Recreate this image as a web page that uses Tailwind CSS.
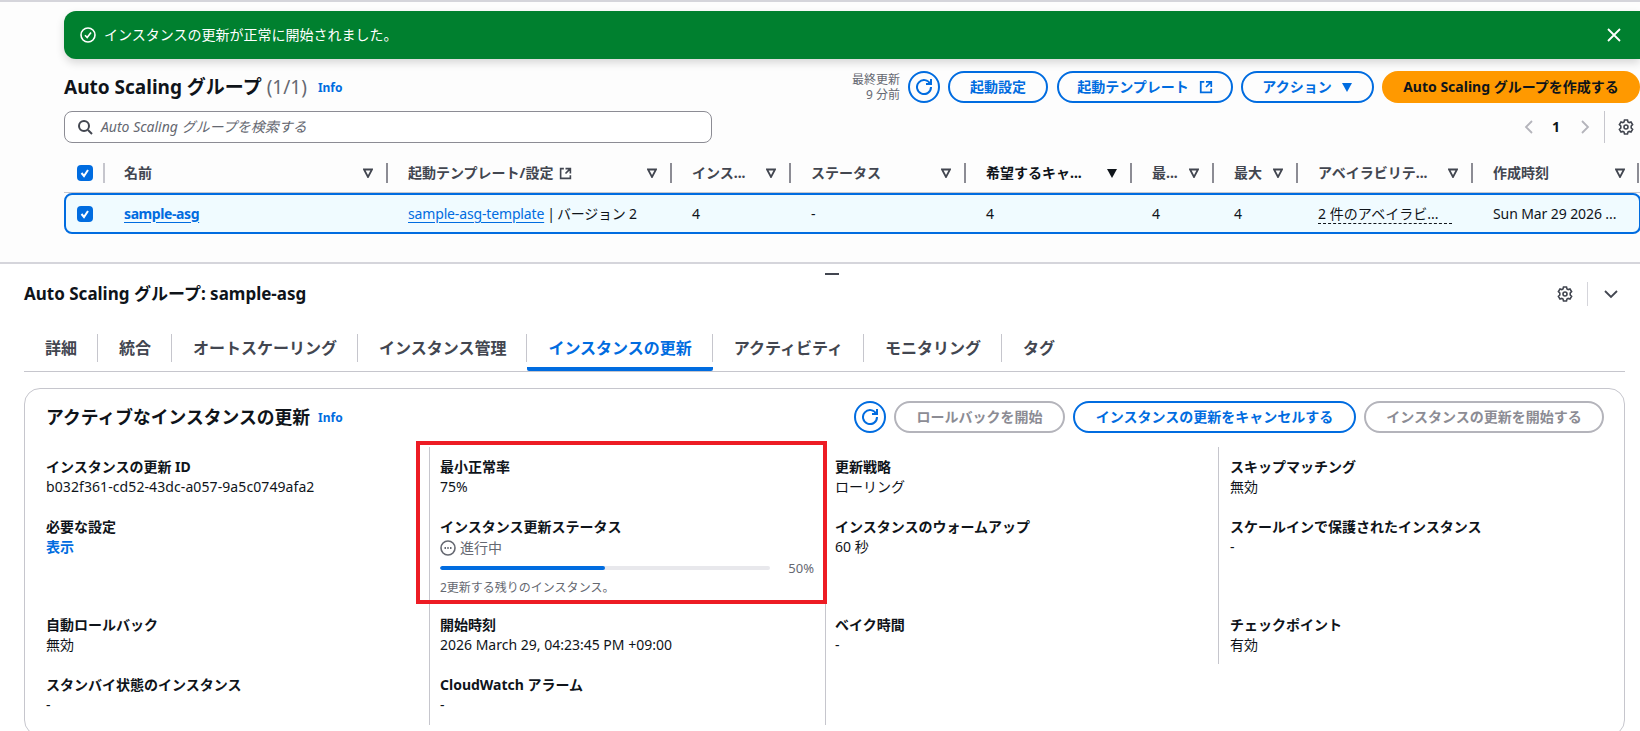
<!DOCTYPE html>
<html lang="ja"><head><meta charset="utf-8">
<script src="https://cdn.jsdelivr.net/npm/@tailwindcss/browser@4"></script>
</head>
<body class="bg-white text-[#0f141a] text-[14px] leading-[20px] font-['Noto_Sans','Noto_Sans_CJK_JP',sans-serif] overflow-hidden">
<div class="relative w-[1640px] h-[731px] overflow-hidden">
  <section class="h-[264px] border-t-2 border-b-2 border-[#d5d5db] bg-[#fdfdfd] pl-[64px] pt-[9px] box-border">
    <div class="h-[48px] bg-[#00802f] rounded-l-[12px] text-white flex items-center pl-[16px] pr-[16px] shadow-[0_4px_8px_rgba(0,0,0,0.15)]">
      <svg class="w-[16px] h-[16px] mr-[8px]" viewBox="0 0 16 16" fill="none" stroke="currentColor" stroke-width="1.6"><circle cx="8" cy="8" r="7"/><path d="m5 8.2 2.2 2.3L11 5.5"/></svg>
      <span class="text-[14px]">インスタンスの更新が正常に開始されました。</span>
      <svg class="w-[16px] h-[16px] ml-auto mr-[2px]" viewBox="0 0 16 16" fill="none" stroke="currentColor" stroke-width="1.8"><path d="m2 2 12 12M14 2 2 14"/></svg>
    </div>
    <div class="flex items-center h-[32px] mt-[12px]">
      <h1 class="text-[19px] font-bold leading-[24px]">Auto Scaling グループ <span class="font-normal text-[#656871]">(1/1)</span></h1>
      <a class="text-[12px] font-bold text-[#006ce0] ml-[11px] mt-[2px]">Info</a>
      <div class="ml-auto text-[12px] leading-[15px] text-[#656871] text-right mr-[8px] w-[50px]">最終更新<br>9 分前</div>
      <button class="w-[32px] h-[32px] rounded-full border-2 border-[#006ce0] flex items-center justify-center text-[#006ce0] mr-[8px]">
        <svg class="w-[16px] h-[16px]" viewBox="0 0 16 16" fill="none" stroke="currentColor" stroke-width="2"><path d="M10 5h5V0"/><path d="M15 8a7 7 0 1 1-.7-3"/></svg></button>
      <button class="w-[100px] h-[32px] rounded-full border-2 border-[#006ce0] text-[#006ce0] font-bold text-[14px] mr-[9px]">起動設定</button>
      <button class="w-[176px] h-[32px] rounded-full border-2 border-[#006ce0] text-[#006ce0] font-bold text-[14px] mr-[8px] flex items-center justify-center gap-[10px]">起動テンプレート
        <svg class="w-[14px] h-[14px]" viewBox="0 0 16 16" fill="none" stroke="currentColor" stroke-width="2"><path d="M14 8V2H8M14 2 8 8M6 2H2v12h12v-4"/></svg></button>
      <button class="w-[133px] h-[32px] rounded-full border-2 border-[#006ce0] text-[#006ce0] font-bold text-[14px] mr-[8px] flex items-center justify-center gap-[9px]">アクション
        <svg class="w-[12px] h-[12px]" viewBox="0 0 12 12" fill="currentColor"><path d="M1 2h10L6 11z"/></svg></button>
      <button class="w-[258px] h-[32px] rounded-full bg-[#ff9900] font-bold text-[14px]">Auto Scaling グループを作成する</button>
    </div>
    <div class="flex items-center h-[32px] mt-[8px]">
      <div class="w-[648px] h-[32px] border border-[#8c8c94] rounded-[8px] bg-white flex items-center pl-[12px] italic text-[#656871] text-[14px]">
        <svg class="w-[16px] h-[16px] mr-[8px] text-[#424650]" viewBox="0 0 16 16" fill="none" stroke="currentColor" stroke-width="2"><circle cx="7" cy="7" r="5"/><path d="m11 11 4 4"/></svg>
        Auto Scaling グループを検索する
      </div>
      <div class="ml-auto flex items-center h-[32px] text-[#0f141a]">
        <svg class="w-[12px] h-[16px] text-[#b4b4bb] mr-[17px]" viewBox="0 0 12 16" fill="none" stroke="currentColor" stroke-width="1.8"><path d="M9 2 3 8l6 6"/></svg>
        <span class="font-bold text-[14px] mr-[19px]">1</span>
        <svg class="w-[12px] h-[16px] text-[#b4b4bb] mr-[13px]" viewBox="0 0 12 16" fill="none" stroke="currentColor" stroke-width="1.8"><path d="m3 2 6 6-6 6"/></svg>
        <span class="w-px h-[32px] bg-[#c6c6cd] mr-[13px]"></span>
        <svg class="w-[16px] h-[16px] mr-[6px] text-[#424650]" viewBox="0 0 16 16" fill="none" stroke="currentColor" stroke-width="1.6"><path d="M6.5 1h3l.5 1.9 1.2.7 1.8-.6 1.6 2.6L13.2 7v2l1.4 1.4-1.6 2.6-1.8-.6-1.2.7-.5 1.9h-3L6 13.1l-1.2-.7-1.8.6-1.6-2.6L2.8 9V7L1.4 5.6 3 3l1.8.6L6 2.9z"/><circle cx="8" cy="8" r="2"/></svg>
      </div>
    </div>
    <div class="flex items-center h-[20px] mt-[20px] font-bold text-[#424650] text-[14px]">
      <div class="w-[60px] flex items-center shrink-0 pl-[13px]">
        <span class="w-[16px] h-[16px] rounded-[4px] bg-[#006ce0] flex items-center justify-center"><svg class="w-[12px] h-[12px]" viewBox="0 0 12 12" fill="none" stroke="#fff" stroke-width="2"><path d="m2.5 6 2.5 3 4-6"/></svg></span>
        <span class="w-[2px] h-[20px] bg-[#c6c6cd] ml-[10px]"></span>
      </div>
      <div class="w-[284px] shrink-0 flex items-center pr-[20px]"><span>名前</span><span class="ml-auto text-[#424650] mr-[13px] w-[10px] h-[10px]"><svg viewBox="0 0 10 10" fill="none" stroke="currentColor" stroke-width="1.8"><path d="M1 1.5h8L5 9z"/></svg></span><span class="w-[2px] h-[20px] bg-[#8c8c94]"></span></div>
      <div class="w-[284px] shrink-0 flex items-center pr-[20px]"><span>起動テンプレート/設定</span><svg class="w-[13px] h-[13px] ml-[6px]" viewBox="0 0 16 16" fill="none" stroke="currentColor" stroke-width="2"><path d="M14 8V2H8M14 2 8 8M6 2H2v12h12v-4"/></svg><span class="ml-auto mr-[13px] w-[10px] h-[10px]"><svg viewBox="0 0 10 10" fill="none" stroke="currentColor" stroke-width="1.8"><path d="M1 1.5h8L5 9z"/></svg></span><span class="w-[2px] h-[20px] bg-[#8c8c94]"></span></div>
      <div class="w-[119px] shrink-0 flex items-center pr-[20px]"><span>インス...</span><span class="ml-auto mr-[13px] w-[10px] h-[10px]"><svg viewBox="0 0 10 10" fill="none" stroke="currentColor" stroke-width="1.8"><path d="M1 1.5h8L5 9z"/></svg></span><span class="w-[2px] h-[20px] bg-[#8c8c94]"></span></div>
      <div class="w-[175px] shrink-0 flex items-center pr-[20px]"><span>ステータス</span><span class="ml-auto mr-[13px] w-[10px] h-[10px]"><svg viewBox="0 0 10 10" fill="none" stroke="currentColor" stroke-width="1.8"><path d="M1 1.5h8L5 9z"/></svg></span><span class="w-[2px] h-[20px] bg-[#8c8c94]"></span></div>
      <div class="w-[166px] shrink-0 flex items-center pr-[20px] text-[#0f141a]"><span>希望するキャ...</span><span class="ml-auto mr-[13px] w-[10px] h-[10px]"><svg viewBox="0 0 10 10" fill="currentColor"><path d="M0 1h10L5 10z"/></svg></span><span class="w-[2px] h-[20px] bg-[#8c8c94]"></span></div>
      <div class="w-[82px] shrink-0 flex items-center pr-[20px]"><span>最...</span><span class="ml-auto mr-[13px] w-[10px] h-[10px]"><svg viewBox="0 0 10 10" fill="none" stroke="currentColor" stroke-width="1.8"><path d="M1 1.5h8L5 9z"/></svg></span><span class="w-[2px] h-[20px] bg-[#8c8c94]"></span></div>
      <div class="w-[84px] shrink-0 flex items-center pr-[20px]"><span>最大</span><span class="ml-auto mr-[13px] w-[10px] h-[10px]"><svg viewBox="0 0 10 10" fill="none" stroke="currentColor" stroke-width="1.8"><path d="M1 1.5h8L5 9z"/></svg></span><span class="w-[2px] h-[20px] bg-[#8c8c94]"></span></div>
      <div class="w-[175px] shrink-0 flex items-center pr-[20px]"><span>アベイラビリテ...</span><span class="ml-auto mr-[13px] w-[10px] h-[10px]"><svg viewBox="0 0 10 10" fill="none" stroke="currentColor" stroke-width="1.8"><path d="M1 1.5h8L5 9z"/></svg></span><span class="w-[2px] h-[20px] bg-[#8c8c94]"></span></div>
      <div class="w-[147px] shrink-0 flex items-center pr-[1px]"><span>作成時刻</span><span class="ml-auto mr-[12px] w-[10px] h-[10px]"><svg viewBox="0 0 10 10" fill="none" stroke="currentColor" stroke-width="1.8"><path d="M1 1.5h8L5 9z"/></svg></span><span class="w-[2px] h-[20px] bg-[#8c8c94]"></span></div>
    </div>
    <div class="h-px bg-[#c6c6cd] mt-[9px]"></div>
    <div class="flex items-center h-[41px] border-2 border-[#006ce0] rounded-[8px] bg-[#f0fbff] -mr-px box-border">
      <div class="w-[58px] shrink-0 pl-[11px]"><span class="w-[16px] h-[16px] rounded-[4px] bg-[#006ce0] flex items-center justify-center"><svg class="w-[12px] h-[12px]" viewBox="0 0 12 12" fill="none" stroke="#fff" stroke-width="2"><path d="m2.5 6 2.5 3 4-6"/></svg></span></div>
      <div class="w-[284px] shrink-0"><a class="font-bold tracking-[-0.4px] text-[#006ce0] underline underline-offset-3">sample-asg</a></div>
      <div class="w-[284px] shrink-0 whitespace-nowrap"><a class="text-[#006ce0] tracking-[-0.15px] underline underline-offset-3">sample-asg-template</a><span class="ml-[3px]">|</span><span class="ml-[2px] tracking-[-0.2px]">バージョン 2</span></div>
      <div class="w-[119px] shrink-0">4</div>
      <div class="w-[175px] shrink-0">-</div>
      <div class="w-[166px] shrink-0">4</div>
      <div class="w-[82px] shrink-0">4</div>
      <div class="w-[84px] shrink-0">4</div>
      <div class="w-[175px] shrink-0"><span class="border-b border-dashed border-[#0f141a] inline-block w-[134px] leading-[19px]">2 件のアベイラビ...</span></div>
      <div class="w-[143px] shrink-0 whitespace-nowrap tracking-[-0.1px]">Sun Mar 29 2026 ...</div>
    </div>
  </section>
  <div class="absolute left-[825px] top-[273px] w-[14px] h-[2px] bg-[#424650]"></div>
  <section class="px-[24px]">
    <div class="flex items-center h-[32px] mt-[14px] -mr-[3px]">
      <h2 class="font-bold text-[17px]">Auto Scaling グループ: sample-asg</h2>
      <svg class="w-[16px] h-[16px] ml-auto mr-[14px] text-[#424650]" viewBox="0 0 16 16" fill="none" stroke="currentColor" stroke-width="1.6"><path d="M6.5 1h3l.5 1.9 1.2.7 1.8-.6 1.6 2.6L13.2 7v2l1.4 1.4-1.6 2.6-1.8-.6-1.2.7-.5 1.9h-3L6 13.1l-1.2-.7-1.8.6-1.6-2.6L2.8 9V7L1.4 5.6 3 3l1.8.6L6 2.9z"/><circle cx="8" cy="8" r="2"/></svg>
      <span class="w-px h-[24px] bg-[#d5d5db] mr-[15px]"></span>
      <svg class="w-[16px] h-[16px] text-[#424650]" viewBox="0 0 16 16" fill="none" stroke="currentColor" stroke-width="1.8"><path d="m2 5 6 6 6-6"/></svg>
    </div>
    <nav class="flex h-[38px] mt-[24px] w-[1601px] border-b border-[#c6c6cd] text-[16px] font-bold text-[#424650] box-border">
      <div class="h-[37px] flex items-start"><span class="flex items-center h-[28px] pl-[21px] pr-[20px] border-r border-[#c6c6cd]">詳細</span></div>
      <div class="h-[37px] flex items-start"><span class="flex items-center h-[28px] pl-[21px] pr-[20px] border-r border-[#c6c6cd]">統合</span></div>
      <div class="h-[37px] flex items-start"><span class="flex items-center h-[28px] pl-[21px] pr-[20px] border-r border-[#c6c6cd]">オートスケーリング</span></div>
      <div class="h-[37px] flex items-start"><span class="flex items-center h-[28px] pl-[21px] pr-[20px] border-r border-[#c6c6cd]">インスタンス管理</span></div>
      <div class="h-[37px] flex items-start text-[#006ce0] border-b-[4px] border-[#006ce0] rounded-b-[2px]"><span class="flex items-center h-[28px] pl-[21px] pr-[20px] border-r border-[#c6c6cd]">インスタンスの更新</span></div>
      <div class="h-[37px] flex items-start"><span class="flex items-center h-[28px] pl-[21px] pr-[20px] border-r border-[#c6c6cd]">アクティビティ</span></div>
      <div class="h-[37px] flex items-start"><span class="flex items-center h-[28px] pl-[21px] pr-[20px] border-r border-[#c6c6cd]">モニタリング</span></div>
      <div class="h-[37px] flex items-start"><span class="flex items-center h-[28px] pl-[21px] pr-[20px]">タグ</span></div>
    </nav>
    <div class="mt-[16px] w-[1601px] h-[348px] border border-[#c6c6cd] rounded-[16px] box-border pt-[12px] pl-[21px] pr-[20px]">
      <div class="flex items-center h-[32px]">
        <h3 class="font-bold text-[17.8px]">アクティブなインスタンスの更新</h3>
        <a class="text-[12px] font-bold text-[#006ce0] ml-[8px] mt-[2px]">Info</a>
        <button class="ml-auto w-[32px] h-[32px] rounded-full border-2 border-[#006ce0] flex items-center justify-center text-[#006ce0] mr-[8px]">
          <svg class="w-[16px] h-[16px]" viewBox="0 0 16 16" fill="none" stroke="currentColor" stroke-width="2"><path d="M10 5h5V0"/><path d="M15 8a7 7 0 1 1-.7-3"/></svg></button>
        <button class="w-[171px] h-[32px] rounded-full border-2 border-[#b4b4bb] text-[#8c8c94] font-bold mr-[8px]">ロールバックを開始</button>
        <button class="w-[283px] h-[32px] rounded-full border-2 border-[#006ce0] text-[#006ce0] font-bold mr-[8px]">インスタンスの更新をキャンセルする</button>
        <button class="w-[240px] h-[32px] rounded-full border-2 border-[#b4b4bb] text-[#8c8c94] font-bold">インスタンスの更新を開始する</button>
      </div>
      <div class="flex mt-[14px] h-[278px]">
        <div class="w-[384px] shrink-0 border-r border-[#c6c6cd] pt-[10px]">
          <div class="h-[60px]"><p class="font-bold">インスタンスの更新 ID</p><p class="tracking-[0.09px]">b032f361-cd52-43dc-a057-9a5c0749afa2</p></div>
          <div class="h-[98px]"><p class="font-bold">必要な設定</p><p class="font-bold text-[#006ce0]">表示</p></div>
          <div class="h-[60px]"><p class="font-bold">自動ロールバック</p><p>無効</p></div>
          <div><p class="font-bold">スタンバイ状態のインスタンス</p><p>-</p></div>
        </div>
        <div class="w-[396px] shrink-0 border-r border-[#c6c6cd] pt-[10px] pl-[10px] pr-[11px]">
          <div class="h-[60px]"><p class="font-bold">最小正常率</p><p>75%</p></div>
          <div class="h-[98px]"><p class="font-bold">インスタンス更新ステータス</p>
            <p class="flex items-center text-[#656871] h-[20px] mt-[1px]"><svg class="w-[16px] h-[16px] mr-[4px]" viewBox="0 0 16 16" fill="none" stroke="currentColor" stroke-width="1.6"><circle cx="8" cy="8" r="7"/><path d="M4.5 8h1.500M7.300 8h1.400M10 8h1.500" stroke-width="1.8"/></svg>進行中</p>
            <div class="flex items-center h-[20px]"><div class="w-[330px] h-[4px] rounded-full bg-[#e8e8ec] overflow-hidden"><div class="h-[4px] bg-[#006ce0] rounded-full" style="width:50%"></div></div><span class="ml-auto text-[13px] text-[#656871]">50%</span></div>
            <p class="text-[12px] leading-[16px] text-[#656871] mt-[2px]">2更新する残りのインスタンス。</p>
          </div>
          <div class="h-[60px]"><p class="font-bold">開始時刻</p><p>2026 March 29, 04:23:45 PM +09:00</p></div>
          <div><p class="font-bold">CloudWatch アラーム</p><p>-</p></div>
        </div>
        <div class="w-[393px] shrink-0 pl-[9px] pt-[10px] h-[217px] border-r border-[#c6c6cd]">
          <div class="h-[60px]"><p class="font-bold">更新戦略</p><p>ローリング</p></div>
          <div class="h-[98px]"><p class="font-bold">インスタンスのウォームアップ</p><p>60 秒</p></div>
          <div><p class="font-bold">ベイク時間</p><p>-</p></div>
        </div>
        <div class="pl-[11px] pt-[10px]">
          <div class="h-[60px]"><p class="font-bold">スキップマッチング</p><p>無効</p></div>
          <div class="h-[98px]"><p class="font-bold">スケールインで保護されたインスタンス</p><p>-</p></div>
          <div><p class="font-bold">チェックポイント</p><p>有効</p></div>
        </div>
      </div>
    </div>
  </section>
  <div class="absolute left-[416px] top-[441px] w-[411px] h-[163px] border-[4px] border-[#ed1c24] pointer-events-none"></div>
</div>
</body></html>
